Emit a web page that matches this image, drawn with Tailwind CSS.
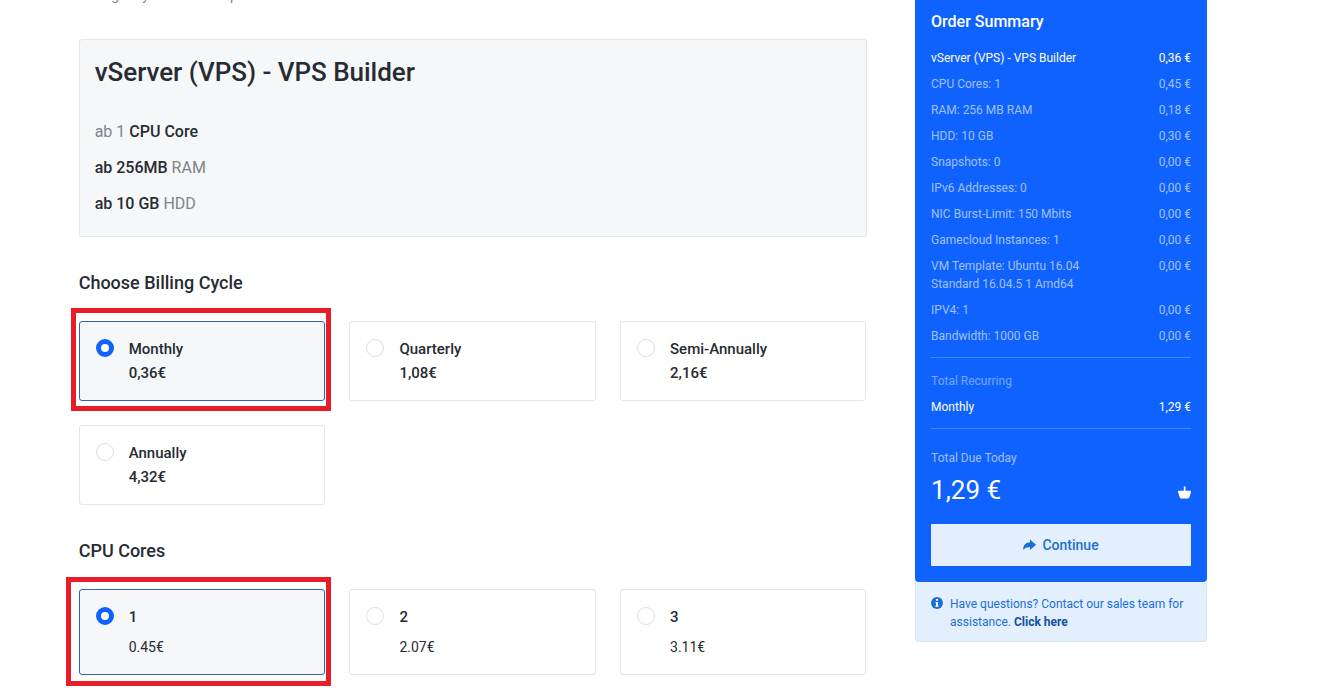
<!DOCTYPE html>
<html lang="en">
<head>
<meta charset="utf-8">
<title>Configure</title>
<script src="https://cdn.jsdelivr.net/npm/@tailwindcss/browser@4"></script>
</head>
<body class="h-[697px] overflow-hidden bg-white font-['Roboto',sans-serif] text-[#272b33]">
<div class="flex h-full items-start gap-12 pl-[78.67px]">
  <main class="w-[788px] shrink-0">
    <p class="-mt-[15px] h-[54px] text-sm leading-5 text-[#808489]">Configure your desired options and continue to checkout.</p>
    <section class="h-[198px] rounded-[3px] border border-[#e3e5e8] bg-[#f5f7f9] px-[15px] pt-4">
      <h1 class="text-[26px] leading-8 font-medium tracking-[-0.03px]">vServer (VPS) - VPS Builder</h1>
      <div class="mt-[26px] text-base leading-9 text-[#808489]">
        <p>ab 1 <span class="font-medium text-[#272b33]">CPU Core</span></p>
        <p><span class="font-medium text-[#272b33]">ab 256MB</span> RAM</p>
        <p><span class="font-medium text-[#272b33]">ab 10 GB</span> HDD</p>
      </div>
    </section>
    <h2 class="mt-[34px] text-lg leading-6 font-medium">Choose Billing Cycle</h2>
    <div class="mt-[26px] grid w-[787.33px] grid-cols-3 gap-6 text-[15px] leading-6 font-medium">
      <div class="relative flex h-20 gap-[15px] rounded-[3px] border border-[#2b62c4] bg-[#f5f7f9] pt-[15px] pl-4">
        <div class="absolute -top-[14px] -left-[9px] h-[103px] w-[260px] border-5 border-[#e71d27]"></div>
        <span class="mt-[2px] size-[18px] shrink-0 rounded-full border-5 border-[#1062fe] bg-white"></span>
        <div><p>Monthly</p><p>0,36€</p></div>
      </div>
      <div class="flex h-20 gap-[15.3px] rounded-[3px] border border-[#e3e5e8] pt-[15px] pl-4">
        <span class="mt-[2px] size-[18px] shrink-0 rounded-full border border-[#dcdee1]"></span>
        <div><p>Quarterly</p><p>1,08€</p></div>
      </div>
      <div class="flex h-20 gap-[15.5px] rounded-[3px] border border-[#e3e5e8] pt-[15px] pl-4">
        <span class="mt-[2px] size-[18px] shrink-0 rounded-full border border-[#dcdee1]"></span>
        <div><p>Semi-Annually</p><p>2,16€</p></div>
      </div>
      <div class="flex h-20 gap-[15px] rounded-[3px] border border-[#e3e5e8] pt-[15px] pl-4">
        <span class="mt-[2px] size-[18px] shrink-0 rounded-full border border-[#dcdee1]"></span>
        <div><p>Annually</p><p>4,32€</p></div>
      </div>
    </div>
    <h2 class="mt-[34px] text-lg leading-6 font-medium">CPU Cores</h2>
    <div class="mt-[26px] grid w-[787.33px] grid-cols-3 gap-6 text-[15px] leading-6 font-medium">
      <div class="relative flex h-[86px] gap-[15px] rounded-[3px] border border-[#2b62c4] bg-[#f5f7f9] pt-[15px] pl-4">
        <div class="absolute -top-[13px] -left-[14px] h-[109px] w-[265px] border-5 border-[#e71d27]"></div>
        <span class="mt-[2px] size-[18px] shrink-0 rounded-full border-5 border-[#1062fe] bg-white"></span>
        <div><p>1</p><p class="mt-[6px] text-sm leading-6 font-normal">0.45€</p></div>
      </div>
      <div class="flex h-[86px] gap-[15.3px] rounded-[3px] border border-[#e3e5e8] pt-[15px] pl-4">
        <span class="mt-[2px] size-[18px] shrink-0 rounded-full border border-[#dcdee1]"></span>
        <div><p>2</p><p class="mt-[6px] text-sm leading-6 font-normal">2.07€</p></div>
      </div>
      <div class="flex h-[86px] gap-[15.5px] rounded-[3px] border border-[#e3e5e8] pt-[15px] pl-4">
        <span class="mt-[2px] size-[18px] shrink-0 rounded-full border border-[#dcdee1]"></span>
        <div><p>3</p><p class="mt-[6px] text-sm leading-6 font-normal">3.11€</p></div>
      </div>
    </div>
  </main>
  <aside class="ml-[0.4px] w-[292px] shrink-0 rounded-b-[4px] bg-[#e3effd] text-xs leading-[18px]">
    <div class="h-[582px] rounded-b-[4px] bg-[#1062fe] px-4 pt-[10px] text-white">
      <h2 class="text-base leading-6 font-medium">Order Summary</h2>
      <div class="mt-[15px] flex flex-col gap-2 text-[#a0c1ff]">
        <div class="flex justify-between text-white"><span>vServer (VPS) - VPS Builder</span><span>0,36 €</span></div>
        <div class="flex justify-between"><span>CPU Cores: 1</span><span>0,45 €</span></div>
        <div class="flex justify-between"><span>RAM: 256 MB RAM</span><span>0,18 €</span></div>
        <div class="flex justify-between"><span>HDD: 10 GB</span><span>0,30 €</span></div>
        <div class="flex justify-between"><span>Snapshots: 0</span><span>0,00 €</span></div>
        <div class="flex justify-between"><span>IPv6 Addresses: 0</span><span>0,00 €</span></div>
        <div class="flex justify-between"><span>NIC Burst-Limit: 150 Mbits</span><span>0,00 €</span></div>
        <div class="flex justify-between"><span>Gamecloud Instances: 1</span><span>0,00 €</span></div>
        <div class="flex justify-between"><span>VM Template: Ubuntu 16.04<br>Standard 16.04.5 1 Amd64</span><span>0,00 €</span></div>
        <div class="flex justify-between"><span>IPV4: 1</span><span>0,00 €</span></div>
        <div class="flex justify-between"><span>Bandwidth: 1000 GB</span><span>0,00 €</span></div>
      </div>
      <div class="mt-3 border-y border-[#4886fe] pt-[14px] pb-3">
        <p class="text-[#78a7ff]">Total Recurring</p>
        <div class="mt-2 flex justify-between"><span>Monthly</span><span>1,29 €</span></div>
      </div>
      <p class="mt-5 text-[#a0c1ff]">Total Due Today</p>
      <div class="mt-[7px] flex h-8 items-center justify-between">
        <span class="text-[26px] leading-8">1,29 €</span>
        <svg class="mt-[5px] h-[13px] w-[13px]" viewBox="0 0 13 13" fill="#fff"><path d="M5.800 .5h1.700v4.300h5c.3 0 .5.200.5.500v1.200c0 .3-.2.500-.5.500-.2 2.400-.8 4.200-1.900 5.200-.3.300-.6.400-1 .4H3.500c-.4 0-.7-.1-1-.4C1.400 11.200.8 9.400.6 7 .2 7 0 6.800 0 6.500V5.300c0-.3.200-.5.500-.5h5.300z"/></svg>
      </div>
      <button class="mt-[18px] flex h-[42px] w-full items-center justify-center gap-[6px] rounded-[1px] bg-[#e3effd] text-sm font-medium text-[#1a6fd6]">
        <svg class="h-[12px] w-[13px]" viewBox="0 0 13 12" fill="currentColor"><path d="M7 .5 13 5.800 7 11V8.300C4.200 8 2.200 8.700.8 10.600.3 10.900.2 10.700.2 10.200.2 6.200 2.800 3.500 7 3.300z"/></svg>
        Continue
      </button>
    </div>
    <div class="flex h-[60px] rounded-b-[4px] border border-t-0 border-[#d5e5f9] pt-[13px] pl-[15px] text-[#1a6fd6]">
      <svg class="mt-[2px] mr-[7px] size-3 shrink-0" viewBox="0 0 12 12"><circle cx="6" cy="6" r="6" fill="#1a6fd6"/><path d="M5 2h2v1.700H5zM4.500 4.900H7v3.700h.6v1.200H4.400V8.600H5V6.100h-.5z" fill="#fff"/></svg>
      <p>Have questions? Contact our sales team for<br>assistance. <span class="font-bold text-[#11529f]">Click here</span></p>
    </div>
  </aside>
</div>
</body>
</html>
